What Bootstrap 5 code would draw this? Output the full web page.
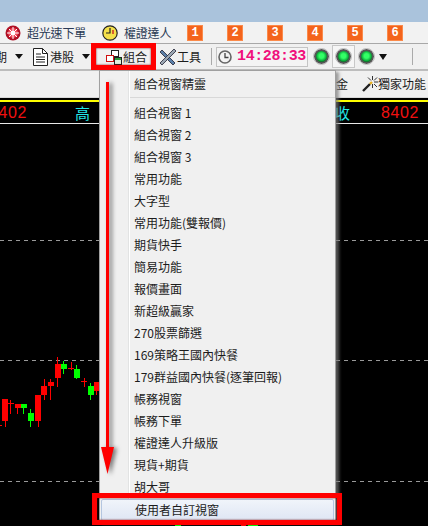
<!DOCTYPE html>
<html lang="zh-Hant">

<head>
  <meta charset="UTF-8" />
  <meta name="viewport" content="width=device-width, initial-scale=1.0" />
  <title>組合視窗</title>

  <link href="https://cdn.jsdelivr.net/npm/bootstrap@5.3.0/dist/css/bootstrap.min.css" rel="stylesheet">
  <style>
    html, body { height: 100%; }
    body {
      background: #000;
      overflow: hidden;
      font: 12px/16px "Noto Sans CJK TC", sans-serif;
      color: #1c1c1c;
    }
    .app-frame { position: relative; width: 428px; height: 526px; overflow: hidden; }
    .title-strip { height: 22px; background: #aac3dc; }
    .tool-top { height: 22px; background: #f2f2f2; border-bottom: 1px solid #a8a8a8; padding-left: 5px; white-space: nowrap; }
    .tool-top .tool-label { color: #2b3a55; letter-spacing: -.2px; flex-shrink: 0; }
    .num-key {
      flex-shrink: 0; width: 16px; height: 16px; margin-right: 24px;
      background: #f4641c; color: #fff; font: bold 12px/16px "Liberation Mono", monospace;
      text-align: center; box-shadow: inset 0 0 0 1px #fb8a4a;
    }
    .tool-main { height: 27px; background: #f0f0f0; border-bottom: 2px solid #bdbdbd; overflow: hidden; font-size: 12px; }
    .cut-text { margin-left: -5px; width: 12px; }
    .drop-tri { width: 0; height: 0; border: 4px solid transparent; border-top: 5px solid #111; border-bottom: 0; }
    .bar-sep { width: 1px; height: 17px; background: #aaa; }
    .clock-box {
      width: 92px; height: 20px; border: 1px solid #c4c4c4; background: #f4f4f4;
      color: #f0107c; font: bold 15px/18px "Liberation Mono", monospace; letter-spacing: -.4px;
    }
    .lamp {
      width: 15px; height: 15px; border-radius: 50%;
      background: radial-gradient(circle at 50% 45%, #33ff66 0 28%, #0ca83a 60%, #0c7a2a 70%);
      border: 2px solid #555; outline: 1px solid #bbb;
    }
    .lamp-btn { width: 23px; height: 23px; border: 1px solid #c8c8c8; background: #f6f6f6; }
    .sub-row { height: 27px; background: #f0f0f0; border-bottom: 1px solid #d8d8d8; font-size: 12px; padding-right: 2px; }
    .quote-strip {
      height: 24px; background: #000; border-top: 2px solid #ff0; border-bottom: 1px solid #e8e8e8;
      margin-top: 2px; font: 15px/21px "Noto Sans CJK TC", sans-serif;
    }
    .quote-red { color: #f01010; font-family: "Liberation Sans", sans-serif; font-size: 16px; letter-spacing: .6px; }
    .quote-cyan { color: #22e8e8; }
    .chart-layer { position: absolute; left: 0; top: 0; }
    .combo-menu {
      position: absolute; left: 99px; top: 70px; width: 237px; height: 452px;
      display: block; margin: 0; padding: 2px 0 0; border: 1px solid #a0a0a0; border-radius: 0;
      background: linear-gradient(to right, #f0f0f0 0 28px, #e2e3e3 28px 29px, #fff 29px 30px, #f0f0f0 30px);
      box-shadow: 3px 2px 3px rgba(120, 120, 120, .7);
      font-size: 12px;
    }
    .combo-menu .dropdown-item { height: 22px; padding: 3px 0 3px 34px; font-size: 12px; line-height: 16px; color: #1c1c1c; }
    .combo-menu .dropdown-divider { margin: 2px 0 3px 30px; height: 2px; border-top: 1px solid #d8d8d8; opacity: 1; }
    .combo-menu .dropdown-item.picked {
      margin: 1px 1px 0; width: auto; padding-left: 33px; padding-top: 2px;
      border: 1px solid #b4c6e0; border-radius: 2px;
      background: linear-gradient(#f0f4fa, #dfe6f4);
    }
    .mark-box { position: absolute; z-index: 1010; border: 5px solid #f00; box-shadow: inset 0 0 2px #600; }
    .box-top { left: 91px; top: 43px; width: 65px; height: 27px; }
    .box-bottom { left: 92px; top: 493px; width: 250px; height: 32px; }
    .arrow-layer { position: absolute; z-index: 1010; left: 0; top: 0; filter: drop-shadow(3px 1px 2px rgba(0, 0, 0, .5)); }
  </style>
</head>

<body>
  <div class="app-frame">
    <div class="title-strip"></div>

    <div class="tool-top d-flex align-items-center">
      <svg class="flex-shrink-0" width="16" height="16" viewBox="0 0 16 16">
        <circle cx="8" cy="8" r="7.5" fill="#b01024" />
        <circle cx="8" cy="8" r="5" fill="#f04a5a" />
        <path d="M8 2v12M2 8h12M4 4l8 8M12 4l-8 8" stroke="#fff" stroke-width="1" />
        <circle cx="8" cy="8" r="2.2" fill="#fff" />
      </svg>
      <span class="tool-label" style="margin-left:6px">超光速下單</span>
      <svg class="flex-shrink-0" width="16" height="16" viewBox="0 0 16 16" style="margin-left:16px">
        <circle cx="8" cy="8" r="7.2" fill="#f4e04a" stroke="#222" stroke-width="1.2" />
        <path d="M8 3v5H4" fill="none" stroke="#222" stroke-width="1.2" />
        <path d="M11 5v4" stroke="#c22" stroke-width="1.4" />
      </svg>
      <span class="tool-label" style="margin-left:6px;margin-right:16px">權證達人</span>
      <span class="num-key">1</span>
      <span class="num-key">2</span>
      <span class="num-key">3</span>
      <span class="num-key">4</span>
      <span class="num-key">5</span>
      <span class="num-key">6</span>
    </div>

    <div class="tool-main d-flex align-items-center">
      <span class="cut-text overflow-hidden text-nowrap flex-shrink-0">期</span>
      <span class="drop-tri flex-shrink-0" style="margin-left:8px"></span>
      <svg class="flex-shrink-0" style="margin-left:10px" width="15" height="18" viewBox="0 0 15 18">
        <path d="M.5.5h9l5 5v12H.5z" fill="#fff" stroke="#222" />
        <path d="M9.5.5v5h5M3 6h5M3 9h9M3 11.500h9M3 14h9" fill="none" stroke="#222" />
      </svg>
      <span class="flex-shrink-0 text-nowrap" style="margin-left:2px">港股</span>
      <span class="drop-tri flex-shrink-0" style="margin-left:8px"></span>
      <svg class="flex-shrink-0" style="margin-left:16px" width="16" height="16" viewBox="0 0 16 16">
        <rect x="5.500" y="1.500" width="7" height="6" fill="#fff" stroke="#222" />
        <rect x=".5" y="6.500" width="7" height="6" fill="#fff" stroke="#d01010" />
        <rect x="8.500" y="8.500" width="7" height="7" fill="#dff0df" stroke="#222" />
        <path d="M9 9h6v2H9z" fill="#2a9a3a" />
      </svg>
      <span class="flex-shrink-0 text-nowrap" style="margin-left:1px">組合</span>
      <svg class="flex-shrink-0" style="margin-left:12px" width="18" height="18" viewBox="0 0 18 18">
        <path d="M3 2l13 13-2 2L1 4z" fill="#5a7fa8" stroke="#223" stroke-width=".8" />
        <path d="M15 1l2 2L6 14l-3 3-2-2 3-3z" fill="#9aa5b1" stroke="#223" stroke-width=".8" />
      </svg>
      <span class="flex-shrink-0 text-nowrap">工具</span>
      <span class="bar-sep flex-shrink-0" style="margin-left:10px"></span>
      <div class="clock-box d-flex align-items-center flex-shrink-0" style="margin-left:4px">
        <svg class="flex-shrink-0" style="margin:0 5px 0 1px" width="14" height="14" viewBox="0 0 14 14">
          <circle cx="7" cy="7" r="6" fill="none" stroke="#666" stroke-width="1.600" />
          <path d="M7 3v4.500h3.500" fill="none" stroke="#444" stroke-width="1.300" />
        </svg>
        <span>14:28:33</span>
      </div>
      <span class="lamp flex-shrink-0" style="margin-left:6px"></span>
      <span class="lamp-btn d-flex align-items-center justify-content-center flex-shrink-0" style="margin-left:3px"><span class="lamp"></span></span>
      <span class="lamp flex-shrink-0" style="margin-left:4px"></span>
      <span class="drop-tri flex-shrink-0" style="margin-left:5px;border-width:6px 4.500px 0;border-top-color:#111"></span>
      <span class="bar-sep flex-shrink-0" style="margin-left:25px"></span>
    </div>

    <div class="sub-row d-flex align-items-center justify-content-end">
      <span>金</span>
      <svg style="margin-left:14px" width="16" height="16" viewBox="0 0 16 16">
        <path d="M1 15l7-7" stroke="#222" stroke-width="2.400" />
        <path d="M8 8l2-2" stroke="#e8b020" stroke-width="2.400" />
        <path d="M10.500 0v4M16 6h-4M15 1.500l-3 3M15 11l-3-3M6 1.500l3 3M10.500 8v4" stroke="#333" stroke-width="1" />
      </svg>
      <span class="text-nowrap">獨家功能</span>
    </div>

    <div class="quote-strip d-flex position-relative">
      <span class="quote-red" style="margin-left:-11px">8402</span>
      <span class="quote-cyan" style="margin-left:48px">高</span>
      <span class="quote-cyan" style="margin-left:245px">收</span>
      <span class="quote-red" style="margin-left:31px">8402</span>
    </div>

    <svg class="chart-layer" width="428" height="526" viewBox="0 0 428 526">
      <g stroke="#999" stroke-dasharray="4 4">
        <path d="M0 240.500h428M0 360.500h428M0 481.500h428" />
      </g>
      <g stroke="#f00" stroke-width="1">
        <path d="M5.500 399v28M10.500 400v14M7 403.500h7M17.500 404v10M38.500 421v6M44.500 379v21M50.500 379v21M57.500 357v30M71.500 362v8M68 368.500h6M84.500 378v9M81 381.500h6M96.500 382v13M0 425.500h2" />
      </g>
      <g fill="#f00">
        <rect x="2" y="399" width="6" height="22" />
        <rect x="15" y="404" width="6" height="4" />
        <rect x="35" y="395" width="6" height="26" />
        <rect x="41" y="386" width="6" height="9" />
        <rect x="48" y="382" width="6" height="4" />
        <rect x="55" y="364" width="6" height="14" />
        <rect x="94" y="382" width="5" height="9" />
        <rect x="241" y="525" width="5" height="1" />
      </g>
      <g stroke="#0f0" stroke-width="1">
        <path d="M23.500 408v6M30.500 409v18M63.500 361v13M76.500 365v14M90.500 383v17" />
      </g>
      <g fill="#0f0">
        <rect x="21" y="404" width="6" height="4" />
        <rect x="28" y="413" width="6" height="8" />
        <rect x="61" y="364" width="6" height="5" />
        <rect x="74" y="369" width="6" height="9" />
        <rect x="88" y="386" width="6" height="9" />
        <rect x="175" y="525" width="6" height="1" />
        <rect x="248" y="525" width="10" height="1" />
      </g>
    </svg>

    <ul class="dropdown-menu combo-menu list-unstyled">
      <li><span class="dropdown-item">組合視窗精靈</span></li>
      <li><div class="dropdown-divider"></div></li>
      <li><span class="dropdown-item">組合視窗 1</span></li>
      <li><span class="dropdown-item">組合視窗 2</span></li>
      <li><span class="dropdown-item">組合視窗 3</span></li>
      <li><span class="dropdown-item">常用功能</span></li>
      <li><span class="dropdown-item">大字型</span></li>
      <li><span class="dropdown-item">常用功能(雙報價)</span></li>
      <li><span class="dropdown-item">期貨快手</span></li>
      <li><span class="dropdown-item">簡易功能</span></li>
      <li><span class="dropdown-item">報價畫面</span></li>
      <li><span class="dropdown-item">新超級贏家</span></li>
      <li><span class="dropdown-item">270股票篩選</span></li>
      <li><span class="dropdown-item">169策略王國內快餐</span></li>
      <li><span class="dropdown-item">179群益國內快餐(逐筆回報)</span></li>
      <li><span class="dropdown-item">帳務視窗</span></li>
      <li><span class="dropdown-item">帳務下單</span></li>
      <li><span class="dropdown-item">權證達人升級版</span></li>
      <li><span class="dropdown-item">現貨+期貨</span></li>
      <li><span class="dropdown-item">胡大哥</span></li>
      <li><span class="dropdown-item picked">使用者自訂視窗</span></li>
    </ul>

    <div class="mark-box box-top"></div>
    <div class="mark-box box-bottom"></div>
    <svg class="arrow-layer" width="428" height="526" viewBox="0 0 428 526">
      <path d="M106 82h3v365h5l-6.500 27-6.500-27h5z" fill="#f00" />
    </svg>
  </div>

  <script src="https://cdn.jsdelivr.net/npm/bootstrap@5.3.0/dist/js/bootstrap.bundle.min.js"></script>
</body>

</html>
